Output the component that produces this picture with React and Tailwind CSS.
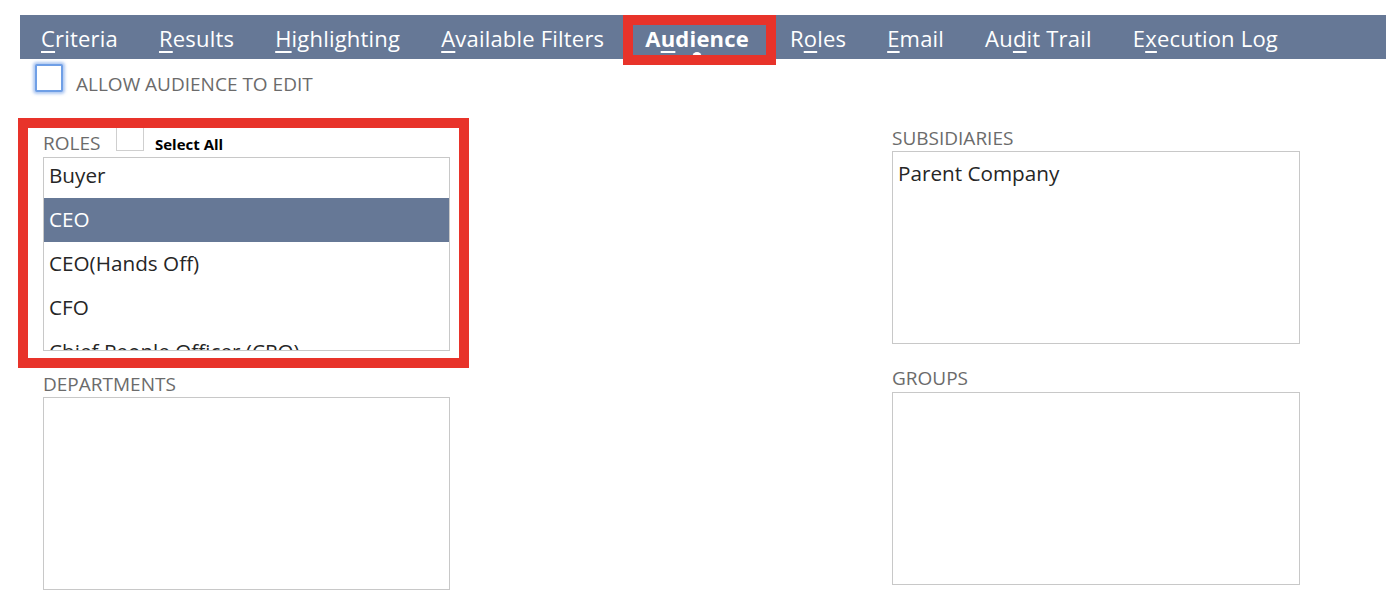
import React from "react";

const FONT = { fontFamily: '"Open Sans", "Liberation Sans", sans-serif' };

// Tab labels; `key` marks the access-key letter that gets underlined.
const TABS = [
  { pre: "", key: "C", post: "riteria" },
  { pre: "", key: "R", post: "esults" },
  { pre: "", key: "H", post: "ighlighting" },
  { pre: "", key: "A", post: "vailable Filters" },
  { pre: "A", key: "u", post: "dience", active: true },
  { pre: "R", key: "o", post: "les" },
  { pre: "", key: "E", post: "mail" },
  { pre: "Au", key: "d", post: "it Trail" },
  { pre: "E", key: "x", post: "ecution Log" },
];

const ROLES = [
  "Buyer",
  "CEO",
  "CEO(Hands Off)",
  "CFO",
  "Chief People Officer (CPO)",
];

function Tab({ tab }) {
  return (
    <div className="relative h-full flex items-center pt-[2px]">
      <span
        className={
          "text-[22px] leading-[30px] text-white whitespace-nowrap tracking-[0.2px] " +
          (tab.active ? "font-bold" : "font-normal")
        }
      >
        {tab.pre}
        <span className="underline decoration-[2px] underline-offset-[4px]">
          {tab.key}
        </span>
        {tab.post}
      </span>
      {tab.active && (
        <>
          <span className="absolute left-1/2 top-[37px] -translate-x-1/2 w-[9px] h-[9px] rounded-full bg-white" />
          <span className="absolute left-[-22px] right-[-27px] top-0 bottom-[-6px] border-[10px] border-[#e8332a] pointer-events-none" />
        </>
      )}
    </div>
  );
}

function FieldLabel({ children, className = "" }) {
  return (
    <div
      className={
        "text-[19px] leading-[20px] text-[#6b6b6b] uppercase " + className
      }
    >
      {children}
    </div>
  );
}

export default function App() {
  return (
    <div className="w-[1386px] h-[602px] bg-white overflow-hidden" style={FONT}>
      {/* tab strip */}
      <nav className="mt-[15px] ml-[20px] h-[44px] bg-[#667896] flex items-stretch pl-[21px] gap-[41px]">
        {TABS.map((t, i) => (
          <Tab key={i} tab={t} />
        ))}
      </nav>

      {/* allow audience to edit */}
      <div className="mt-[5px] ml-[35px] h-[28px] flex items-start">
        <span className="w-[28px] h-[28px] rounded-[2px] border-2 border-[#6f9fe6] bg-white shadow-[0_0_3px_2px_rgba(110,155,230,0.55)]" />
        <span className="ml-[13px] mt-[10px] text-[19px] leading-[20px] text-[#6b6b6b]">
          ALLOW AUDIENCE TO EDIT
        </span>
      </div>

      <div className="flex items-start">
        {/* left column */}
        <div className="ml-[43px] w-[407px] pt-[33px]">
          <section className="relative">
            <div className="flex items-end h-[28px]">
              <span className="w-[73px] text-[19px] leading-[20px] text-[#6b6b6b]">
                ROLES
              </span>
              <span className="w-[28px] h-[26px] mb-[2px] border border-[#cfcfcf] bg-white" />
              <span className="ml-[11px] mb-[1px] text-[15px] leading-[16px] font-bold text-black">
                Select All
              </span>
            </div>
            <div className="mt-[4px] h-[194px] border border-[#c8c8c8] overflow-hidden">
              <div className="-mt-[4px]">
                {ROLES.map((r) => (
                  <div
                    key={r}
                    className={
                      "h-[44px] flex items-center pl-[5px] text-[20.7px] whitespace-nowrap " +
                      (r === "CEO"
                        ? "bg-[#667896] text-white"
                        : "text-[#262626]")
                    }
                  >
                    {r}
                  </div>
                ))}
              </div>
            </div>
            <span className="absolute left-[-25px] right-[-19px] top-[-7px] bottom-[-17px] border-[10px] border-[#e8332a] pointer-events-none" />
          </section>

          <FieldLabel className="mt-[23px]">Departments</FieldLabel>
          <div className="mt-[3px] h-[193px] border border-[#c8c8c8]" />
        </div>

        {/* right column */}
        <div className="ml-[442px] w-[408px] pt-[36px]">
          <FieldLabel>Subsidiaries</FieldLabel>
          <div className="mt-[3px] h-[193px] border border-[#c8c8c8]">
            <div className="h-[44px] flex items-center pl-[5px] text-[20.7px] text-[#262626]">
              Parent Company
            </div>
          </div>
          <FieldLabel className="mt-[24px]">Groups</FieldLabel>
          <div className="mt-[4px] h-[193px] border border-[#c8c8c8]" />
        </div>
      </div>
    </div>
  );
}
